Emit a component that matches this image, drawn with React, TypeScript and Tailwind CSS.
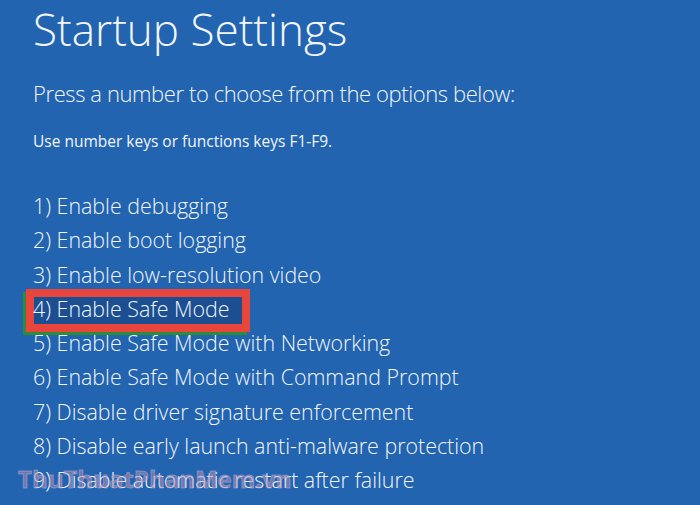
const OPTIONS = [
  "1) Enable debugging",
  "2) Enable boot logging",
  "3) Enable low-resolution video",
  "4) Enable Safe Mode",
  "5) Enable Safe Mode with Networking",
  "6) Enable Safe Mode with Command Prompt",
  "7) Disable driver signature enforcement",
  "8) Disable early launch anti-malware protection",
  "9) Disable automatic restart after failure",
];

const SELECTED = 3;

export default function App() {
  return (
    <div
      className="relative h-[505px] w-[700px] overflow-hidden bg-[#2264b0] text-[#f2f6fb]"
      style={{ fontFamily: '"Open Sans", "Noto Sans", sans-serif' }}
    >
      <div className="flex flex-col pl-[33px]">
        <h1 className="pt-[1px] text-[44px] font-light leading-[56px]">Startup Settings</h1>
        <p className="mt-[20px] text-[22px] font-light leading-[32px] tracking-[-0.4px]">
          Press a number to choose from the options below:
        </p>
        <p className="mt-[22px] text-[15.5px] leading-[20px]">
          Use number keys or functions keys F1-F9.
        </p>
        <ul className="mt-[38px] flex flex-col">
          {OPTIONS.map((label, i) => (
            <li key={label} className="relative text-[21.4px] font-light leading-[34.25px]">
              {i === SELECTED && (
                <span className="absolute left-[-7px] top-[-3px] h-[43px] w-[224px] border-[8px] border-[#e8453c] bg-[#1b4f92] shadow-[-3px_3px_0_#2e8b3a]" />
              )}
              <span className="relative">{label}</span>
            </li>
          ))}
        </ul>
      </div>
      {/* watermark */}
      <div className="absolute left-[18px] top-[463px] text-[24px] font-bold leading-[32px] text-[#b48fb4]/55 [-webkit-text-stroke:1px_rgba(200,180,210,0.45)]">
        ThuThuatPhanMem.vn
      </div>
    </div>
  );
}
